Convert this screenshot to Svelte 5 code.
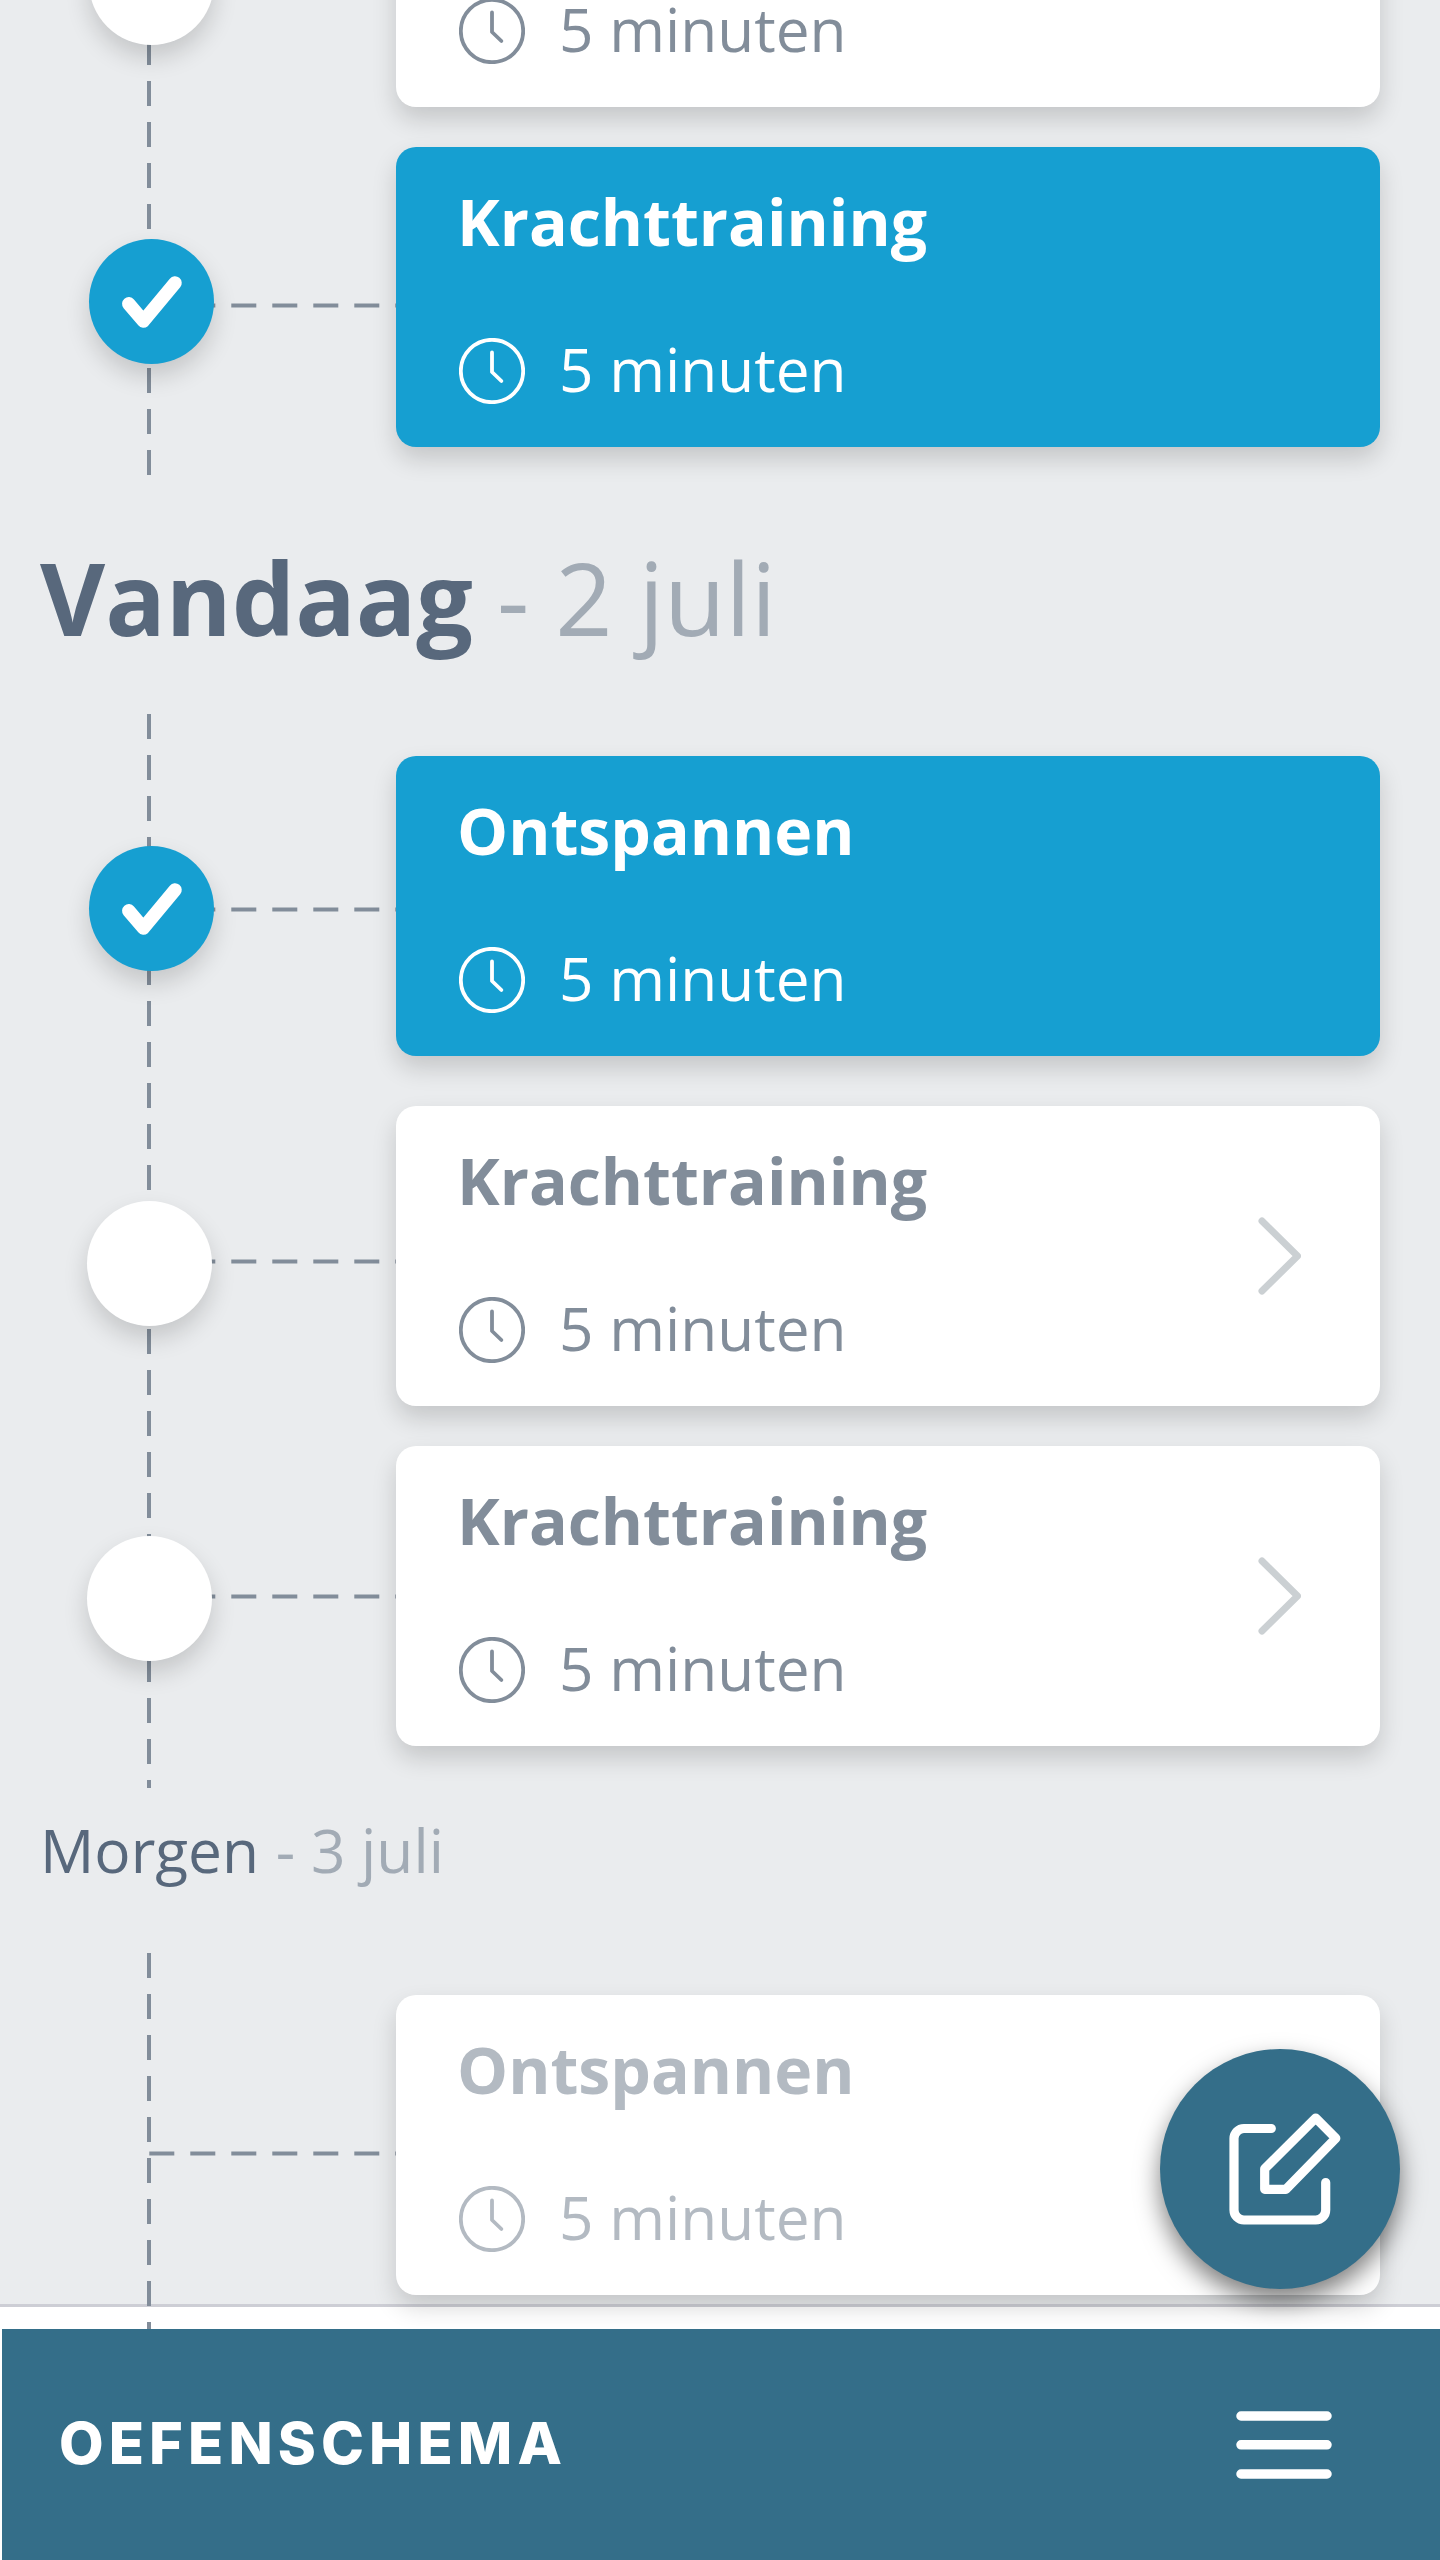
<script lang="ts">
  type Item = {
    title?: string;
    tone: 'done' | 'open' | 'future';
    node?: 'check' | 'empty';
    nodeX?: number;
    nodeY?: number;
    linkY?: number;
    arrow?: boolean;
  };

  const yesterday: Item[] = [
    // Scrolled so far that only the duration line of this card is in view.
    { tone: 'open', node: 'empty', nodeX: 89, nodeY: 113 },
    { title: 'Krachttraining', tone: 'done', node: 'check', nodeX: 89, nodeY: 92, linkY: 156 }
  ];
  const today: Item[] = [
    { title: 'Ontspannen', tone: 'done', node: 'check', nodeX: 89, nodeY: 90, linkY: 151 },
    { title: 'Krachttraining', tone: 'open', node: 'empty', nodeX: 87, nodeY: 95, linkY: 153, arrow: true },
    { title: 'Krachttraining', tone: 'open', node: 'empty', nodeX: 87, nodeY: 90, linkY: 148, arrow: true }
  ];
  const tomorrow: Item[] = [{ title: 'Ontspannen', tone: 'future', linkY: 156 }];
</script>

{#snippet row(item: Item)}
  <li class="row">
    <div class="rail">
      {#if item.linkY !== undefined}
        <svg class="link" style:top="{item.linkY}px" width="247" height="5" viewBox="0 0 247 5">
          <line x1="0.3" y1="2.5" x2="247" y2="2.5" />
        </svg>
      {/if}
      {#if item.node}
        <span class="node {item.node}" style:left="{item.nodeX}px" style:top="{item.nodeY}px">
          {#if item.node === 'check'}
            <svg width="125" height="125" viewBox="0 0 125 125">
              <path d="M39.8 64.8 54.4 82 86 44" />
            </svg>
          {/if}
        </span>
      {/if}
    </div>
    <article class="card {item.tone}">
      <div class="body">
        {#if item.title}<h2>{item.title}</h2>{/if}
        <div class="time">
          <svg width="66" height="66" viewBox="0 0 66 66">
            <circle cx="33" cy="33" r="31.2" />
            <path d="M33 14.5V34L42.4 43" />
          </svg>
          <span>5 minuten</span>
        </div>
      </div>
      {#if item.arrow}
        <svg class="arrow" width="44" height="80" viewBox="0 0 44 80">
          <path d="M5 5 40.5 40 5 75" />
        </svg>
      {/if}
    </article>
  </li>
{/snippet}

<div class="screen">
  <main>
    <ul class="day first">
      {#each yesterday as item}{@render row(item)}{/each}
    </ul>
    <h1 class="big"><b>Vandaag</b> <span>- 2 juli</span></h1>
    <ul class="day today">
      {#each today as item}{@render row(item)}{/each}
    </ul>
    <h1 class="small">Morgen <span>- 3 juli</span></h1>
    <ul class="day tomorrow">
      {#each tomorrow as item}{@render row(item)}{/each}
    </ul>
  </main>

  <button class="fab" aria-label="Bewerken">
    <svg width="240" height="240" viewBox="0 0 240 240">
      <path d="M111.3 79.5H84A10 10 0 0 0 74 89.5V161A10 10 0 0 0 84 171H155.7A10 10 0 0 0 165.7 161V133.5" />
      <path d="M155.7 69 175.8 89.3 126 140.3H104.7V119.8Z" />
    </svg>
  </button>

  <footer>
    <strong>OEFENSCHEMA</strong>
    <svg width="98" height="70" viewBox="0 0 98 70">
      <path d="M6 6H92M6 34.8H92M6 64H92" />
    </svg>
  </footer>
</div>

<style>
  :global(body) {
    margin: 0;
    background: #fff;
  }
  .screen {
    position: relative;
    display: flex;
    flex-direction: column;
    width: 1440px;
    height: 2560px;
    overflow: hidden;
    font-family: 'Open Sans', 'Noto Sans', sans-serif;
    color: #58687c;
  }
  main {
    box-sizing: border-box;
    flex: none;
    height: 2307px;
    background: #eaecee;
    border-bottom: 3px solid #cdced5;
  }
  ul {
    margin: 0;
    padding: 0;
    list-style: none;
  }
  .day {
    box-sizing: border-box;
    position: relative;
    display: flex;
    flex-direction: column;
    gap: 40px;
    /* vertical dashed rail, 25px dash and 16px gap */
    background: repeating-linear-gradient(#828d9a 0 25px, transparent 25px 41px) 147px 0 / 4px 100% no-repeat;
  }
  .first {
    height: 476px;
    background-position: 147px -1px;
    background-size: 4px 476px;
    justify-content: flex-end;
    padding-bottom: 29px;
  }
  .today {
    height: 1074px;
    padding-top: 42px;
  }
  .today .row:nth-child(2) {
    margin-top: 10px;
  }
  .tomorrow {
    height: 376px;
    padding-top: 42px;
  }
  .row {
    display: flex;
    flex: none;
    height: 300px;
  }
  .rail {
    position: relative;
    flex: none;
    width: 396px;
  }
  .link {
    position: absolute;
    left: 149px;
  }
  .link line {
    stroke: #828d9a;
    stroke-width: 4;
    stroke-dasharray: 25 16;
  }
  .node {
    position: absolute;
    width: 125px;
    height: 125px;
    border-radius: 50%;
    background: #fff;
    box-shadow: 0 12px 24px rgba(0, 0, 0, 0.16);
  }
  .node.check {
    background: #169fd1;
  }
  .node svg {
    display: block;
  }
  .node path {
    fill: none;
    stroke: #fff;
    stroke-width: 13.5;
    stroke-linecap: round;
    stroke-linejoin: round;
  }
  .card {
    position: relative;
    box-sizing: border-box;
    display: flex;
    justify-content: space-between;
    align-items: center;
    width: 984px;
    height: 300px;
    padding: 0 79px 0 63px;
    border-radius: 20px;
    background: #fff;
    color: #828d9a;
    box-shadow: 0 12px 24px rgba(0, 0, 0, 0.16);
  }
  .card.done {
    background: #169fd1;
    color: #fff;
  }
  .card.future {
    color: #b3bac2;
  }
  .body {
    display: flex;
    flex-direction: column;
    align-self: flex-end;
    gap: 73px;
    padding-bottom: 43px;
  }
  h2 {
    margin: 0 0 0 -2px;
    font-size: 64.3px;
    line-height: 88px;
    font-weight: 700;
  }
  .time {
    display: flex;
    align-items: center;
    gap: 34px;
    height: 66px;
    font-size: 60.3px;
    line-height: 52px;
  }
  .time span {
    padding-bottom: 5px;
  }
  .time svg,
  .arrow {
    flex: none;
    fill: none;
    stroke: currentColor;
    stroke-width: 3.8;
    stroke-linecap: round;
    stroke-linejoin: round;
  }
  .arrow {
    stroke: #cbd0d3;
    stroke-width: 7;
  }
  h1 {
    margin: 0;
    font-weight: 400;
    white-space: pre;
  }
  h1 span {
    color: #a2abb5;
  }
  .big {
    height: 238px;
    padding-left: 40px;
    font-size: 100.3px;
    line-height: 242px;
  }
  .big span {
    margin-left: -2px;
  }
  .small {
    height: 165px;
    padding-left: 40px;
    font-size: 60.4px;
    line-height: 124px;
  }
  .small span {
    margin-left: 1px;
  }
  .fab {
    position: absolute;
    left: 1160px;
    top: 2049px;
    width: 240px;
    height: 240px;
    padding: 0;
    border: 0;
    border-radius: 50%;
    background: #346e89;
    box-shadow: 0 12px 24px rgba(0, 0, 0, 0.5);
  }
  .fab path {
    fill: none;
    stroke: #fff;
    stroke-width: 9.2;
    stroke-linecap: round;
    stroke-linejoin: round;
  }
  footer {
    position: relative;
    box-sizing: border-box;
    display: flex;
    justify-content: space-between;
    align-items: center;
    height: 231px;
    margin: 22px 0 0 2px;
    padding: 0 107.5px 0 57px;
    background: #346e89;
    color: #fff;
  }
  footer strong {
    padding-bottom: 4px;
    font-family: Inter, sans-serif;
    font-size: 57.8px;
    font-weight: 800;
    letter-spacing: 5.1px;
  }
  footer path {
    fill: none;
    stroke: #fff;
    stroke-width: 9.5;
    stroke-linecap: round;
  }
</style>
